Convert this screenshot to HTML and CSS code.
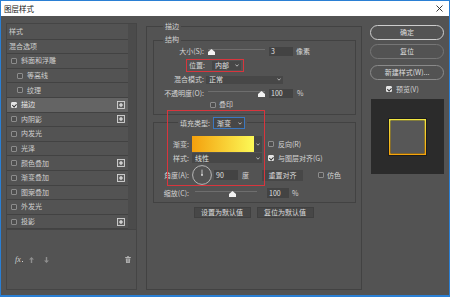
FILE: index.html
```html
<!DOCTYPE html>
<html lang="zh-CN">
<head>
<meta charset="utf-8">
<title>图层样式</title>
<link rel="stylesheet" href="styles.css">
</head>
<body>
<div class="window">
  <div class="titlebar">
    <span class="title">图层样式</span>
    <svg class="close" viewBox="0 0 7 7"><path d="M0.5 0.5 L6.5 6.5 M6.5 0.5 L0.5 6.5" stroke="#222" stroke-width="0.9" fill="none"/></svg>
  </div>
  <div class="main">
    <aside class="styles-panel">
      <div class="list-wrap">
        <ul class="list">
          <li class="row plain">样式</li>
          <li class="row plain">混合选项</li>
          <li class="row"><span class="cb"></span>斜面和浮雕</li>
          <li class="row sub"><span class="cb"></span>等高线</li>
          <li class="row sub"><span class="cb"></span>纹理</li>
          <li class="row active"><span class="cb on"></span>描边<svg class="add" viewBox="0 0 8 8"><rect x="0.5" y="0.5" width="7" height="7" fill="#5f5f5f" stroke="#d4d4d4" stroke-width="0.9"/><path d="M4 2 V6 M2 4 H6" stroke="#f0f0f0" stroke-width="1.1"/></svg></li>
          <li class="row"><span class="cb"></span>内阴影<svg class="add" viewBox="0 0 8 8"><rect x="0.5" y="0.5" width="7" height="7" fill="#5f5f5f" stroke="#d4d4d4" stroke-width="0.9"/><path d="M4 2 V6 M2 4 H6" stroke="#f0f0f0" stroke-width="1.1"/></svg></li>
          <li class="row"><span class="cb"></span>内发光</li>
          <li class="row"><span class="cb"></span>光泽</li>
          <li class="row"><span class="cb"></span>颜色叠加<svg class="add" viewBox="0 0 8 8"><rect x="0.5" y="0.5" width="7" height="7" fill="#5f5f5f" stroke="#d4d4d4" stroke-width="0.9"/><path d="M4 2 V6 M2 4 H6" stroke="#f0f0f0" stroke-width="1.1"/></svg></li>
          <li class="row"><span class="cb"></span>渐变叠加<svg class="add" viewBox="0 0 8 8"><rect x="0.5" y="0.5" width="7" height="7" fill="#5f5f5f" stroke="#d4d4d4" stroke-width="0.9"/><path d="M4 2 V6 M2 4 H6" stroke="#f0f0f0" stroke-width="1.1"/></svg></li>
          <li class="row"><span class="cb"></span>图案叠加</li>
          <li class="row"><span class="cb"></span>外发光</li>
          <li class="row"><span class="cb"></span>投影<svg class="add" viewBox="0 0 8 8"><rect x="0.5" y="0.5" width="7" height="7" fill="#5f5f5f" stroke="#d4d4d4" stroke-width="0.9"/><path d="M4 2 V6 M2 4 H6" stroke="#f0f0f0" stroke-width="1.1"/></svg></li>
        </ul>
        <div class="scroll"></div>
      </div>
      <div class="toolbar">
        <span class="fx">fx</span><span class="fx-dot"></span>
        <svg class="arrow up" viewBox="0 0 5 6"><path d="M2.5 0 L5 2.6 L3.2 2.6 L3.2 6 L1.8 6 L1.8 2.6 L0 2.6 Z" fill="#8e8e8e"/></svg>
        <svg class="arrow down" viewBox="0 0 5 6"><path d="M2.5 6 L5 3.4 L3.2 3.4 L3.2 0 L1.8 0 L1.8 3.4 L0 3.4 Z" fill="#8e8e8e"/></svg>
        <svg class="trash" viewBox="0 0 6 7"><path d="M2 0.3 H4 V1 H5.8 V2 H0.2 V1 H2 Z" fill="#b4b4b4"/><path d="M0.8 2.4 H5.2 L4.9 7 H1.1 Z" fill="#b4b4b4"/><path d="M2.2 3 V6.3 M3 3 V6.3 M3.8 3 V6.3" stroke="#6a6a6a" stroke-width="0.4"/></svg>
      </div>
    </aside>

    <section class="settings">
      <div class="group-title outer-title">描边</div>
      <div class="group structure">
        <div class="group-title">结构</div>
        <div class="frow r-size">
          <span class="lbl">大小(S):</span>
          <span class="slider"><svg class="thumb" viewBox="0 0 7 6"><path d="M3.5 0 L7 3 L7 6 L0 6 L0 3 Z" fill="#f2f2f2"/></svg></span>
          <span class="num">3</span>
          <span class="unit">像素</span>
        </div>
        <div class="frow r-pos">
          <span class="mark">
            <span class="pos-lbl">位置:</span>
            <span class="select sel-pos">内部<svg class="chev" viewBox="0 0 4 3"><path d="M0.4 0.5 L2 2.2 L3.6 0.5" stroke="#d0d0d0" stroke-width="0.8" fill="none"/></svg></span>
          </span>
        </div>
        <div class="frow r-blend">
          <span class="lbl">混合模式:</span>
          <span class="select sel-blend">正常<svg class="chev" viewBox="0 0 4 3"><path d="M0.4 0.5 L2 2.2 L3.6 0.5" stroke="#d0d0d0" stroke-width="0.8" fill="none"/></svg></span>
        </div>
        <div class="frow r-opac">
          <span class="lbl">不透明度(O):</span>
          <span class="slider"><svg class="thumb" style="margin-left:50px" viewBox="0 0 7 6"><path d="M3.5 0 L7 3 L7 6 L0 6 L0 3 Z" fill="#f2f2f2"/></svg></span>
          <span class="num">100</span>
          <span class="unit">%</span>
        </div>
        <div class="frow r-over">
          <span class="cb"></span><span class="cb-lbl">叠印</span>
        </div>
      </div>

      <div class="group fill">
        <div class="fill-head">
          <span class="head-lbl">填充类型:</span>
          <span class="select sel-type">渐变<svg class="chev" viewBox="0 0 4 3"><path d="M0.4 0.5 L2 2.2 L3.6 0.5" stroke="#d0d0d0" stroke-width="0.8" fill="none"/></svg></span>
        </div>
        <div class="frow r-grad">
          <span class="lbl">渐变:</span>
          <span class="gradient"></span>
          <span class="grad-arrow"><svg class="chev" viewBox="0 0 4 3"><path d="M0.4 0.5 L2 2.2 L3.6 0.5" stroke="#d0d0d0" stroke-width="0.8" fill="none"/></svg></span>
          <span class="cb side"></span><span class="cb-lbl">反向(R)</span>
        </div>
        <div class="frow r-style">
          <span class="lbl">样式:</span>
          <span class="select sel-style">线性<svg class="chev" viewBox="0 0 4 3"><path d="M0.4 0.5 L2 2.2 L3.6 0.5" stroke="#d0d0d0" stroke-width="0.8" fill="none"/></svg></span>
          <span class="cb on side"></span><span class="cb-lbl">与图层对齐(G)</span>
        </div>
        <div class="frow r-angle">
          <span class="lbl">角度(A):</span>
          <svg class="dial" viewBox="0 0 20 20"><circle cx="10" cy="10" r="9.4" fill="none" stroke="#cfcfcf" stroke-width="0.8"/><path d="M10 10 V4.6" stroke="#e0e0e0" stroke-width="0.8"/><circle cx="10" cy="10" r="0.9" fill="#e0e0e0"/></svg>
          <span class="num num-angle">90</span>
          <span class="unit deg">度</span>
          <span class="btn-reset">重置对齐</span>
          <span class="cb dither"></span><span class="cb-lbl">仿色</span>
        </div>
        <div class="frow r-scale">
          <span class="lbl">缩放(C):</span>
          <span class="slider slider-scale"><svg class="thumb" style="margin-left:34px" viewBox="0 0 7 6"><path d="M3.5 0 L7 3 L7 6 L0 6 L0 3 Z" fill="#f2f2f2"/></svg></span>
          <span class="num num-scale">100</span>
          <span class="unit">%</span>
        </div>
        <div class="mark-box"></div>
      </div>

      <div class="defaults">
        <button class="dbtn">设置为默认值</button>
        <button class="dbtn">复位为默认值</button>
      </div>
    </section>

    <div class="actions">
      <button class="pill primary">确定</button>
      <button class="pill">复位</button>
      <button class="pill pill-new">新建样式(W)...</button>
      <label class="preview-toggle"><span class="cb on"></span>预览(V)</label>
      <div class="preview"><div class="swatch"><div class="swatch-inner"></div></div></div>
    </div>
  </div>
</div>
</body>
</html>
```

FILE: styles.css
```css
* { box-sizing: border-box; margin: 0; padding: 0; }
html, body { width: 450px; height: 297px; overflow: hidden; background: #535353; }
body {
  font-family: "Noto Sans CJK SC", "Noto Sans", sans-serif;
  font-size: 7px;
  line-height: 1;
  color: #d3d3d3;
}
.window {
  width: 450px; height: 297px;
  border: 1px solid #2a7fd4; border-bottom-width: 2px;
  display: flex; flex-direction: column;
  background: #535353;
}
.titlebar {
  height: 15px; flex: none; background: #fff;
  display: flex; align-items: center; justify-content: space-between;
  padding: 0 6px 0 3px;
}
.title { font-size: 7.5px; color: #111; }
.close { width: 7px; height: 7px; }

.main { flex: 1; display: flex; align-items: flex-start; padding-left: 5px; }

/* left styles list */
.styles-panel {
  width: 131px; height: 267px; margin-top: 7px;
  border: 1px solid #454545;
  display: flex; flex-direction: column;
}
.list-wrap { flex: 1; display: flex; border-bottom: 1px solid #444; }
.list { list-style: none; width: 121px; padding-top: 1px; }
.scroll { flex: 1; background: #4b4b4b; }
.row {
  height: 14.6px; display: flex; align-items: center;
  border-bottom: 1px solid #424242;
  padding-left: 4px; white-space: nowrap; color: #cfcfcf;
}
.row.plain { padding-left: 2px; }
.row.sub { padding-left: 10px; }
.row.active { background: #646464; color: #e4e4e4; }
.row .cb { margin-right: 4px; }
.add { width: 8px; height: 8px; margin-left: auto; margin-right: 3px; }

.cb {
  width: 6px; height: 6px; flex: none; position: relative;
  border: 1px solid #8c8c8c; border-radius: 1px; background: #4e4e4e;
}
.cb.on { background: #e4e4e4; border-color: #e4e4e4; }
.cb.on::after {
  content: ""; position: absolute; left: 1.1px; top: -0.2px;
  width: 1.6px; height: 3px;
  border: solid #2e2e2e; border-width: 0 1px 1px 0;
  transform: rotate(45deg);
}

.toolbar { flex: 1; display: flex; align-items: center; padding-left: 8px; }
.fx { font-family: "Liberation Serif", serif; font-style: italic; font-size: 8px; color: #d0d0d0; }
.fx-dot { width: 1px; height: 1px; background: #d0d0d0; margin: 4px 0 0 1px; align-self: center; }
.arrow { width: 5px; height: 6px; }
.arrow.up { margin-left: 6px; }
.arrow.down { margin-left: 10px; }
.trash { width: 6px; height: 7px; margin-left: auto; margin-right: 5px; }

/* middle settings */
.settings {
  width: 216px; height: 264px; margin: 10px 0 0 9px;
  border: 1px solid #424242;
  padding: 0 4px 0 6px;
}
.group-title {
  height: 8px; line-height: 8px; width: fit-content;
  padding: 0 2px; background: #535353; color: #d0d0d0;
}
.outer-title { margin: -5px 0 0 10px; }
.group { width: 203px; border: 1px solid #424242; }
.structure { margin-top: 10px; padding-bottom: 5px; }
.structure .group-title { margin: -6px 0 0 9px; }

.frow { display: flex; align-items: center; white-space: nowrap; }
.lbl { flex: none; text-align: right; }
.structure .lbl { width: 50px; margin-right: 4px; }
.r-size { height: 14px; margin-top: 1px; }
.r-pos { height: 15px; }
.r-blend { height: 13px; }
.r-blend .lbl { margin-right: 2px; }
.r-opac { height: 14px; }
.r-over { height: 9px; padding-left: 56px; }
.cb-lbl { margin-left: 3px; }

.slider {
  width: 57px; height: 8px; display: flex; align-items: flex-end;
  background: linear-gradient(#6e6e6e, #6e6e6e) no-repeat 0 2px / 100% 1px;
}
.thumb { width: 7px; height: 6px; }
.num {
  width: 24px; height: 9px; margin-left: 4px; padding-left: 2px;
  background: #434343; color: #e0e0e0;
  display: flex; align-items: center;
}
.unit { margin-left: 3px; }
.r-opac .unit { margin-left: 4px; }

.select {
  display: flex; align-items: center; justify-content: space-between;
  background: #474747; color: #e0e0e0; padding: 0 2px 0 3px;
}
.chev { width: 4px; height: 3px; }
.mark {
  display: flex; align-items: center; height: 13px;
  margin-left: 32px; padding: 0 2px;
  border: 1px solid #d8353d;
}
.pos-lbl { width: 16px; text-align: right; margin-right: 7px; }
.sel-pos { width: 29px; height: 9px; }
.sel-blend { width: 77px; height: 8px; }

/* fill section */
.fill { position: relative; margin-top: 7px; padding-bottom: 4px; }
.fill-head {
  margin: -6px 0 0 24px; height: 12px; width: fit-content;
  padding: 0 2px; background: #535353;
  display: flex; align-items: center;
}
.head-lbl { margin-right: 3px; }
.sel-type { width: 32px; height: 12px; border: 1px solid #3b78c0; }
.fill .lbl { width: 35px; margin-right: 3px; }
.r-grad { margin-top: 7px; height: 16px; }
.gradient { width: 62px; height: 16px; background: linear-gradient(90deg, #f4a00d, #fcf957); }
.grad-arrow {
  width: 8px; height: 16px; background: #474747;
  display: flex; align-items: center; justify-content: center;
}
.side { margin-left: 6px; }
.r-grad .cb-lbl, .r-style .cb-lbl { margin-left: 4px; }
.r-style { margin-top: 1px; height: 10px; }
.sel-style { width: 70px; height: 10px; }
.r-angle { margin-top: 2px; height: 20px; }
.dial { width: 20px; height: 20px; flex: none; }
.num-angle { margin-left: 2px; height: 10px; }
.deg { margin-left: 4px; }
.btn-reset {
  width: 41px; height: 11px; margin-left: 13px;
  background: #474747; color: #d8d8d8;
  display: flex; align-items: center; justify-content: center;
}
.dither { margin-left: 15px; }
.r-scale { margin-top: 3px; height: 10px; }
.slider-scale { width: 62px; margin-left: 3px; }
.num-scale { width: 22px; height: 10px; margin-left: 10px; }
.mark-box {
  position: absolute; left: 13px; top: -13px;
  width: 98px; height: 76px;
  border: 1px solid #d8353d; pointer-events: none;
}

.defaults { display: flex; justify-content: center; gap: 6px; margin: 4px 3px 0 0; }
.dbtn {
  width: 57px; height: 11px; font: inherit; color: #dcdcdc;
  background: #474747; border: 1px solid #404040;
  display: flex; align-items: center; justify-content: center;
}

/* right actions */
.actions { width: 74px; margin: 9px 0 0 8px; display: flex; flex-direction: column; }
.pill {
  height: 15px; font: inherit; color: #dedede;
  background: transparent; border: 1px solid #767676; border-radius: 8px;
  display: flex; align-items: center; justify-content: center;
}
.pill + .pill { margin-top: 4px; }
.pill.primary { border-color: #cdcdcd; }
.pill.pill-new { margin-top: 6px; border-color: #8a8a8a; }
.preview-toggle { margin-top: 3px; height: 12px; padding-left: 16px; display: flex; align-items: center; }
.preview-toggle .cb { margin-right: 4px; }
.preview {
  margin: 4px 0 0 1px; width: 73px; height: 75px; background: #2b2b2b;
  display: flex; align-items: center; justify-content: center;
}
.swatch {
  width: 37px; height: 36px; padding: 2px;
  background: linear-gradient(#f3e843, #f6a30a);
  box-shadow: 0 0 0 1px #1d1d1d;
}
.swatch-inner { width: 100%; height: 100%; background: #575757; box-shadow: 0 0 0 0.6px #3a3a3a; }
```
